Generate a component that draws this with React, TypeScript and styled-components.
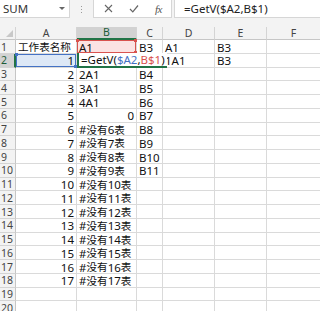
import React from 'react';
import styled, { createGlobalStyle } from 'styled-components';

const GlobalStyle = createGlobalStyle`
  html, body {
    margin: 0;
    padding: 0;
    background: #ffffff;
    overflow: hidden;
  }
  body {
    font-family: 'Noto Sans', 'Noto Sans CJK SC', sans-serif;
  }
`;

const columns = [
  { name: 'A', width: 61 },
  { name: 'B', width: 60 },
  { name: 'C', width: 26 },
  { name: 'D', width: 52 },
  { name: 'E', width: 52 },
  { name: 'F', width: 54 },
];

const ROW_H = 13.75;
const HEAD_W = 16;

const Sheet = styled.div`
  width: 320px;
  height: 311px;
  overflow: hidden;
  background: #ffffff;
`;

const FormulaBar = styled.div`
  display: flex;
  align-items: flex-start;
  height: 27px;
  background: #f3f3f3;
  box-sizing: border-box;
`;

const NameBox = styled.div`
  width: 70px;
  height: 18px;
  background: #ffffff;
  border-right: 1px solid #d6d6d6;
  border-bottom: 1px solid #d6d6d6;
  box-sizing: border-box;
  display: flex;
  align-items: center;
  justify-content: space-between;
  padding: 0 4px 0 3px;
  font-family: 'Noto Sans', 'Liberation Sans', sans-serif;
  font-size: 11.5px;
  color: #333;
`;

const Caret = styled.span`
  width: 0;
  height: 0;
  border-left: 3px solid transparent;
  border-right: 3px solid transparent;
  border-top: 3px solid #666;
`;

const Grip = styled.div`
  width: 23px;
  height: 18px;
  display: flex;
  flex-direction: column;
  align-items: center;
  justify-content: center;
  gap: 2px;
`;

const GripDot = styled.span`
  width: 1px;
  height: 1px;
  background: #9a9a9a;
`;

const ButtonBox = styled.div`
  width: 79px;
  height: 18px;
  background: #ffffff;
  border-left: 1px solid #d6d6d6;
  border-right: 1px solid #d6d6d6;
  border-bottom: 1px solid #d6d6d6;
  box-sizing: border-box;
  display: flex;
  align-items: center;
  padding-left: 10px;
  gap: 16px;
`;

const FxText = styled.span`
  font-family: 'Liberation Serif', serif;
  font-style: italic;
  font-size: 11px;
  color: #555;
  letter-spacing: -0.5px;
`;

const FormulaInput = styled.div`
  flex: 1;
  margin-left: 2px;
  height: 18px;
  background: #ffffff;
  border-left: 1px solid #d6d6d6;
  border-bottom: 1px solid #d6d6d6;
  box-sizing: border-box;
  display: flex;
  align-items: center;
  padding-left: 9px;
  font-family: 'Noto Sans', 'Liberation Sans', sans-serif;
  font-size: 11.5px;
  color: #222;
`;

const Grid = styled.div`
  display: grid;
  grid-template-columns: ${HEAD_W}px ${columns.map((c) => `${c.width}px`).join(' ')};
  grid-template-rows: 13px;
  grid-auto-rows: ${ROW_H}px;
`;

const Corner = styled.div`
  background: #f3f3f3;
  border-right: 1px solid #d4d4d4;
  border-bottom: 1px solid #c6c6c6;
  box-sizing: border-box;
  position: relative;
  &::after {
    content: '';
    position: absolute;
    right: 2px;
    bottom: 2px;
    width: 0;
    height: 0;
    border-left: 7px solid transparent;
    border-bottom: 7px solid #c8c8c8;
  }
`;

const ColHead = styled.div<{ $active?: boolean }>`
  background: ${(p) => (p.$active ? '#d2d2d2' : '#f3f3f3')};
  border-right: 1px solid #d4d4d4;
  border-bottom: ${(p) => (p.$active ? '2px solid #217346' : '1px solid #c6c6c6')};
  box-sizing: border-box;
  display: flex;
  align-items: center;
  justify-content: center;
  font-family: 'Noto Sans', 'Liberation Sans', sans-serif;
  font-size: 10.5px;
  color: ${(p) => (p.$active ? '#1d5c38' : '#444')};
  line-height: 1;
`;

const RowHead = styled.div<{ $active?: boolean }>`
  background: ${(p) => (p.$active ? '#d2d2d2' : '#f3f3f3')};
  border-right: ${(p) => (p.$active ? '2px solid #217346' : '1px solid #c6c6c6')};
  border-bottom: 1px solid #d4d4d4;
  box-sizing: border-box;
  display: flex;
  align-items: center;
  padding: 1px 0 0 1px;
  font-family: 'Noto Sans', 'Liberation Sans', sans-serif;
  font-size: 10.5px;
  color: ${(p) => (p.$active ? '#1d5c38' : '#444')};
  line-height: 1;
  overflow: hidden;
`;

type Tone = 'plain' | 'blue' | 'red';

const Cell = styled.div<{ $right?: boolean; $tone?: Tone }>`
  position: relative;
  border-right: 1px solid #dadada;
  border-bottom: 1px solid #dadada;
  box-sizing: border-box;
  display: flex;
  align-items: center;
  justify-content: ${(p) => (p.$right ? 'flex-end' : 'flex-start')};
  padding: 2px 2px 0 2px;
  font-size: 11.5px;
  line-height: 1;
  color: #111;
  white-space: nowrap;
  background: ${(p) =>
    p.$tone === 'blue' ? '#dde8f6' : p.$tone === 'red' ? '#fbe3e3' : '#ffffff'};
  ${(p) =>
    p.$tone === 'blue'
      ? 'box-shadow: inset 0 0 0 1px #4472c4;'
      : p.$tone === 'red'
      ? 'box-shadow: inset 0 0 0 1px #d9534f;'
      : ''}
`;

const Cjk = styled.span`
  font-family: 'Noto Sans CJK SC', sans-serif;
  font-size: 10.6px;
`;

const Handle = styled.span<{ $color: string; $pos: string }>`
  position: absolute;
  width: 3px;
  height: 3px;
  background: ${(p) => p.$color};
  ${(p) => p.$pos}
`;

const Editor = styled.div`
  position: absolute;
  left: 0;
  top: -1px;
  bottom: -1px;
  min-width: 77px;
  padding: 2px 2px 0 2px;
  background: #ffffff;
  border-left: 2px solid #217346;
  border-bottom: 2px solid #217346;
  box-sizing: border-box;
  display: flex;
  align-items: center;
  z-index: 2;
  font-size: 11.5px;
  color: #111;
  white-space: nowrap;
`;

const RefBlue = styled.span`
  color: #4472c4;
`;

const RefRed = styled.span`
  color: #d9534f;
`;

// split a cell value into Latin and CJK runs so each gets its own size
const Text = ({ value }: { value?: string }) => {
  if (!value) return null;
  const parts = value.match(/[\u4e00-\u9fff]+|[^\u4e00-\u9fff]+/g) || [];
  return (
    <>
      {parts.map((p, i) =>
        /[\u4e00-\u9fff]/.test(p) ? <Cjk key={i}>{p}</Cjk> : <span key={i}>{p}</span>
      )}
    </>
  );
};

type Row = { a?: string; aRight?: boolean; b?: string; bRight?: boolean; c?: string; d?: string; e?: string };

const rows: Row[] = [
  { a: '工作表名称', b: 'A1', c: 'B3', d: 'A1', e: 'B3' },
  { a: '1', aRight: true, d: '1A1', e: 'B3' },
  { a: '2', aRight: true, b: '2A1', c: 'B4' },
  { a: '3', aRight: true, b: '3A1', c: 'B5' },
  { a: '4', aRight: true, b: '4A1', c: 'B6' },
  { a: '5', aRight: true, b: '0', bRight: true, c: 'B7' },
  { a: '6', aRight: true, b: '#没有6表', c: 'B8' },
  { a: '7', aRight: true, b: '#没有7表', c: 'B9' },
  { a: '8', aRight: true, b: '#没有8表', c: 'B10' },
  { a: '9', aRight: true, b: '#没有9表', c: 'B11' },
  ...Array.from({ length: 8 }, (_, i) => ({
    a: String(10 + i),
    aRight: true,
    b: `#没有${10 + i}表`,
  })),
  {},
  {},
];

const CancelIcon = () => (
  <svg width="9" height="9" viewBox="0 0 9 9">
    <path d="M1 1 L8 8 M8 1 L1 8" stroke="#666" strokeWidth="1.1" fill="none" />
  </svg>
);

const CheckIcon = () => (
  <svg width="10" height="9" viewBox="0 0 10 9">
    <path d="M1 5 L3.8 7.8 L9 1.5" stroke="#666" strokeWidth="1.2" fill="none" />
  </svg>
);

const App = () => {
  return (
    <Sheet>
      <GlobalStyle />
      <FormulaBar>
        <NameBox>
          SUM
          <Caret />
        </NameBox>
        <Grip>
          <GripDot />
          <GripDot />
          <GripDot />
        </Grip>
        <ButtonBox>
          <CancelIcon />
          <CheckIcon />
          <FxText>fx</FxText>
        </ButtonBox>
        <FormulaInput>=GetV($A2,B$1)</FormulaInput>
      </FormulaBar>
      <Grid>
        <Corner />
        {columns.map((c) => (
          <ColHead key={c.name} $active={c.name === 'B'}>
            {c.name}
          </ColHead>
        ))}
        {rows.map((r, i) => {
          const n = i + 1;
          return (
            <React.Fragment key={n}>
              <RowHead $active={n === 2}>{n}</RowHead>
              <Cell $right={r.aRight} $tone={n === 2 ? 'blue' : 'plain'}>
                <Text value={r.a} />
                {n === 2 && (
                  <>
                    <Handle $color="#4472c4" $pos="left: -1px; top: -1px;" />
                    <Handle $color="#4472c4" $pos="right: -1px; bottom: -1px;" />
                  </>
                )}
              </Cell>
              <Cell $right={r.bRight} $tone={n === 1 ? 'red' : 'plain'}>
                <Text value={r.b} />
                {n === 1 && (
                  <>
                    <Handle $color="#d9534f" $pos="left: -1px; top: -1px;" />
                    <Handle $color="#d9534f" $pos="right: -1px; top: -1px;" />
                    <Handle $color="#d9534f" $pos="right: -1px; bottom: -1px;" />
                  </>
                )}
                {n === 2 && (
                  <Editor>
                    =GetV(<RefBlue>$A2</RefBlue>,<RefRed>B$1</RefRed>)
                  </Editor>
                )}
              </Cell>
              <Cell>
                <Text value={r.c} />
              </Cell>
              <Cell>
                <Text value={r.d} />
              </Cell>
              <Cell>
                <Text value={r.e} />
              </Cell>
              <Cell />
            </React.Fragment>
          );
        })}
      </Grid>
    </Sheet>
  );
};

export default App;
